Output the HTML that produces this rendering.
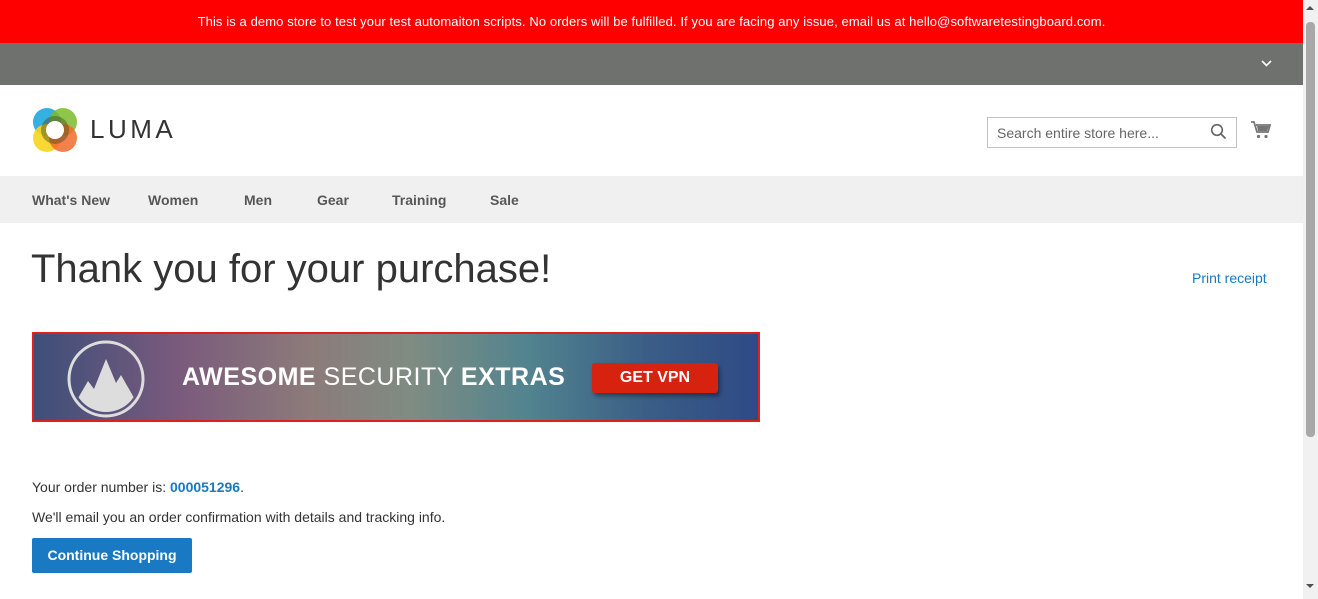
<!DOCTYPE html>
<html><head><meta charset="utf-8"><style>
*{box-sizing:border-box;margin:0;padding:0}
body{width:1318px;height:599px;overflow:hidden;font-family:"Liberation Sans",sans-serif;color:#333;background:#fff;position:relative}
.page{position:absolute;left:0;top:0;width:1303px;height:599px}
.demo{height:43px;background:#ff0000;color:#fff;font-size:13px;text-align:center;line-height:43px;letter-spacing:0.1px}
.gray{height:42px;background:#6e716e;position:relative}
.nav{position:absolute;top:176px;left:0;width:1303px;height:47px;background:#f0f0f0}
.nav span{position:absolute;top:16px;font-size:14px;font-weight:bold;color:#575757}
.abs{position:absolute}
.sb{position:absolute;left:1303px;top:0;width:15px;height:599px;background:#f1f1f1}
.thumb{position:absolute;left:1306px;top:22px;width:9px;height:415px;background:#a8a8a8;border-radius:4px}
</style></head><body>
<div class="page">
<div class="demo">This is a demo store to test your test automaiton scripts. No orders will be fulfilled. If you are facing any issue, email us at hello@softwaretestingboard.com.</div>
<div class="gray"><svg class="abs" style="left:1261px;top:17px" width="11" height="8"><path d="M1 1l4.5 4.5L10 1" stroke="#fff" stroke-width="1.6" fill="none"/></svg></div>
<svg class="abs" style="left:32px;top:107px" width="46" height="46" viewBox="0 0 46 46">
<circle cx="15" cy="15" r="14" fill="#1ea7de" opacity=".9"/><circle cx="31" cy="15" r="14" fill="#7dbb2c" opacity=".85"/><circle cx="15" cy="31" r="14" fill="#f7d51d" opacity=".9"/><circle cx="31" cy="31" r="14" fill="#f26b2b" opacity=".85"/>
<circle cx="23" cy="23" r="14" fill="#4a4a1a" opacity=".45"/><circle cx="23" cy="23" r="9" fill="#fff"/></svg>
<div class="abs" style="left:90px;top:114px;font-size:26px;letter-spacing:3.5px;color:#333">LUMA</div>
<div class="abs" style="left:987px;top:117px;width:250px;height:31px;border:1px solid #c2c2c2;font-size:14px;color:#666;padding:7px 9px">Search entire store here...</div>
<svg class="abs" style="left:1210px;top:123px" width="17" height="17"><circle cx="7" cy="7" r="5.3" stroke="#666" stroke-width="1.6" fill="none"/><path d="M11 11l4.5 4.5" stroke="#666" stroke-width="1.8"/></svg>
<svg class="abs" style="left:1250px;top:120px" width="22" height="20" viewBox="0 0 22 20"><path d="M1 2h3l3 10h11l2-7H6" stroke="#757575" stroke-width="1.8" fill="none"/><path d="M7 6h12l-2 5H8z" fill="#757575"/><circle cx="8.5" cy="16.5" r="1.6" fill="#757575"/><circle cx="16" cy="16.5" r="1.6" fill="#757575"/></svg>
<div class="nav"><span style="left:32px">What's New</span><span style="left:148px">Women</span><span style="left:244px">Men</span><span style="left:317px">Gear</span><span style="left:392px">Training</span><span style="left:490px">Sale</span></div>
<div class="abs" style="left:31px;top:247px;font-size:40px;font-weight:normal;color:#333;letter-spacing:0px">Thank you for your purchase!</div>
<div class="abs" style="left:1192px;top:270px;font-size:14px;color:#1979c3">Print receipt</div>
<div class="abs" style="left:32px;top:332px;width:728px;height:90px;border:2px solid #e0201c;background:linear-gradient(90deg,#3d4f7a 0%,#7a5a7c 20%,#8c7b7a 38%,#7f8c82 52%,#52848f 68%,#3a5d86 85%,#2f4a86 100%);overflow:hidden">
<svg class="abs" style="left:32px;top:5px" width="80" height="80" viewBox="0 0 80 80"><defs><clipPath id="c"><circle cx="40" cy="40" r="33"/></clipPath></defs><circle cx="40" cy="40" r="37" stroke="#ddd" stroke-width="3" fill="none"/><path clip-path="url(#c)" d="M0 80L22 42l6 8 12-30 10 24 5-8 25 44z" fill="#ddd"/></svg>
<div class="abs" style="left:148px;top:29px;font-size:25px;color:#fff;letter-spacing:0.5px"><b>AWESOME</b> SECURITY <b>EXTRAS</b></div>
<div class="abs" style="left:558px;top:29px;width:126px;height:30px;background:#d7220f;border-radius:3px;color:#fff;font-weight:bold;font-size:16px;text-align:center;line-height:30px;box-shadow:2px 3px 4px rgba(0,0,0,.4)">GET VPN</div>
</div>
<div class="abs" style="left:32px;top:479px;font-size:14px">Your order number is: <b style="color:#1979c3">000051296</b>.</div>
<div class="abs" style="left:32px;top:509px;font-size:14px">We'll email you an order confirmation with details and tracking info.</div>
<div class="abs" style="left:32px;top:538px;width:160px;height:35px;background:#1979c3;border:1px solid #1979c3;border-radius:2px;color:#fff;font-weight:bold;font-size:14px;text-align:center;line-height:33px">Continue Shopping</div>
</div>
<div class="sb"></div><div class="thumb"></div>
<div class="abs" style="left:1306px;top:6px;width:0;height:0;border:4px solid transparent;border-bottom-color:#505050;border-top:0"></div>
<div class="abs" style="left:1306px;top:584px;width:0;height:0;border:4px solid transparent;border-top-color:#505050;border-bottom:0"></div>
</body></html>
